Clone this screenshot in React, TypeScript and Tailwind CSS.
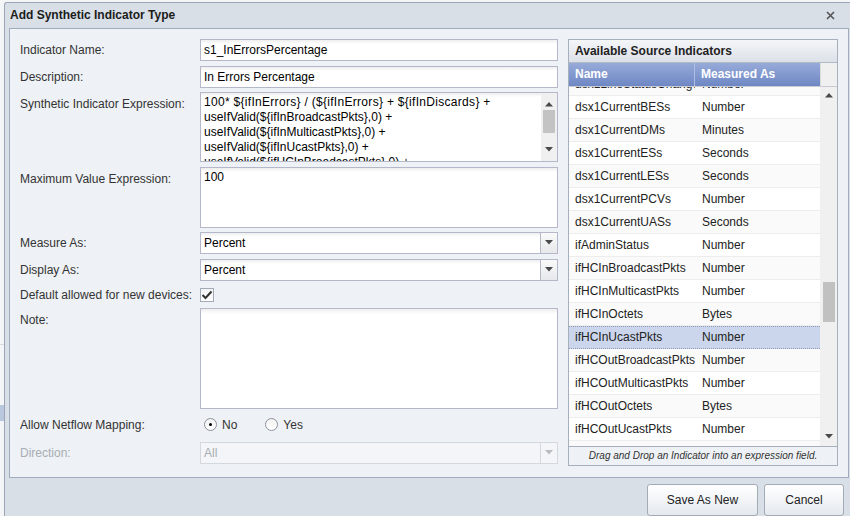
import React from "react";

const rows: [string, string][] = [
  ["dsx1LineStatusChange", "Number"],
  ["dsx1CurrentBESs", "Number"],
  ["dsx1CurrentDMs", "Minutes"],
  ["dsx1CurrentESs", "Seconds"],
  ["dsx1CurrentLESs", "Seconds"],
  ["dsx1CurrentPCVs", "Number"],
  ["dsx1CurrentUASs", "Seconds"],
  ["ifAdminStatus", "Number"],
  ["ifHCInBroadcastPkts", "Number"],
  ["ifHCInMulticastPkts", "Number"],
  ["ifHCInOctets", "Bytes"],
  ["ifHCInUcastPkts", "Number"],
  ["ifHCOutBroadcastPkts", "Number"],
  ["ifHCOutMulticastPkts", "Number"],
  ["ifHCOutOctets", "Bytes"],
  ["ifHCOutUcastPkts", "Number"],
  ["ifInBroadcastPkts", "Number"],
];

const expression = [
  "100* ${ifInErrors} / (${ifInErrors} + ${ifInDiscards} +",
  "useIfValid(${ifInBroadcastPkts},0) +",
  "useIfValid(${ifInMulticastPkts},0) +",
  "useIfValid(${ifInUcastPkts},0) +",
  "useIfValid(${ifHCInBroadcastPkts},0) +",
];

function Down({ color = "#4a4a4a" }: { color?: string }) {
  return (
    <svg width="8" height="5" viewBox="0 0 8 5">
      <path d="M0 0H8L4 4.5Z" fill={color} />
    </svg>
  );
}

function Up() {
  return (
    <svg width="8" height="5" viewBox="0 0 8 5">
      <path d="M0 4.5H8L4 0Z" fill="#4a4a4a" />
    </svg>
  );
}

function Label({ children, disabled }: { children: React.ReactNode; disabled?: boolean }) {
  return (
    <div className={`w-[180px] shrink-0 text-[12px] ${disabled ? "text-[#a8adb4]" : "text-[#333]"}`}>
      {children}
    </div>
  );
}

function TextField({ value }: { value: string }) {
  return (
    <div className="h-[22px] w-[358px] border border-[#b5b8c8] bg-[linear-gradient(to_bottom,#eeeeee,#ffffff_4px)] px-[3px] flex items-center text-[12px] text-black">
      {value}
    </div>
  );
}

function Select({ value, disabled }: { value: string; disabled?: boolean }) {
  return (
    <div
      className={`h-[22px] w-[358px] border flex ${
        disabled ? "border-[#d3d7de] bg-[#f3f5f8] text-[#a8adb4]" : "border-[#b5b8c8] bg-[linear-gradient(to_bottom,#eeeeee,#ffffff_4px)] text-black"
      }`}
    >
      <div className="flex-1 px-[3px] flex items-center text-[12px]">{value}</div>
      <div
        className={`w-[17px] border-l flex items-center justify-center ${
          disabled ? "border-[#d3d7de] bg-[#f3f5f8]" : "border-[#b5b8c8] bg-[linear-gradient(to_bottom,#fafafa,#e6e8eb)]"
        }`}
      >
        <Down color={disabled ? "#b8bcc2" : "#4a4a4a"} />
      </div>
    </div>
  );
}

function Radio({ checked }: { checked?: boolean }) {
  return (
    <div className="w-[13px] h-[13px] rounded-full border border-[#8d939c] bg-[linear-gradient(to_bottom,#f2f2f2,#ffffff)] flex items-center justify-center">
      {checked && <div className="w-[3px] h-[3px] rounded-full bg-black" />}
    </div>
  );
}

export default function App() {
  return (
    <div className="w-[850px] h-[516px] overflow-hidden bg-[#f4f5f7] flex font-['Liberation_Sans',Arial,sans-serif]">
      <div className="w-[4px] shrink-0 flex flex-col">
        <div className="h-[345px] border-b border-[#d7dbe1]" />
        <div className="h-[60px]" />
        <div className="h-[16px] bg-[#b9c8df]" />
      </div>
      <div className="mt-[2px] w-[846px] h-[514px] border-l border-t border-[#9aa5b5] rounded-tl-[3px] bg-[#d8dfe7] flex flex-col">
        <div className="h-[25px] flex items-center justify-between pl-[5px] pr-[15px] text-[12px] font-bold text-[#1c1c1c]">
          <span>Add Synthetic Indicator Type</span>
          <svg width="9" height="9" viewBox="0 0 9 9">
            <path d="M1 1L8 8M8 1L1 8" stroke="#555" strokeWidth="1.6" />
          </svg>
        </div>
        <div className="ml-[4px] mr-[1px] h-[452px] border border-[#a0acbd] bg-[#eef1f5] flex pl-[10px] pr-[10px] pt-[10px]">
          {/* left form */}
          <div className="w-[538px] shrink-0 flex flex-col">
            <div className="flex items-center">
              <Label>Indicator Name:</Label>
              <TextField value="s1_InErrorsPercentage" />
            </div>
            <div className="flex items-center mt-[5px]">
              <Label>Description:</Label>
              <TextField value="In Errors Percentage" />
            </div>
            <div className="flex mt-[4px]">
              <Label>
                <div className="pt-[3px]">Synthetic Indicator Expression:</div>
              </Label>
              <div className="h-[70px] w-[358px] border border-[#b5b8c8] bg-[linear-gradient(to_bottom,#eeeeee,#ffffff_4px)] flex">
                <div className="flex-1 overflow-hidden pl-[3px] pt-[2px] text-[12px] leading-[15px] text-black whitespace-pre">
                  {expression.map((l, i) => (
                    <div key={i} className={i === 0 ? "tracking-[0.3px]" : ""}>{l}</div>
                  ))}
                </div>
                <div className="w-[16px] bg-[#f0f0f0] flex flex-col items-center">
                  <div className="h-[14px] flex items-end justify-center"><Up /></div>
                  <div className="mt-[3px] w-[12px] h-[23px] bg-[#c3c3c3]" />
                  <div className="flex-1" />
                  <div className="h-[16px] flex items-start justify-center pt-[2px]"><Down /></div>
                </div>
              </div>
            </div>
            <div className="flex mt-[5px]">
              <Label>
                <div className="pt-[3px]">Maximum Value Expression:</div>
              </Label>
              <div className="h-[61px] w-[358px] border border-[#b5b8c8] bg-[linear-gradient(to_bottom,#eeeeee,#ffffff_4px)] pl-[3px] pt-[2px] text-[12px] leading-[15px] text-black">
                100
              </div>
            </div>
            <div className="flex items-center mt-[4px]">
              <Label>Measure As:</Label>
              <Select value="Percent" />
            </div>
            <div className="flex items-center mt-[5px]">
              <Label>Display As:</Label>
              <Select value="Percent" />
            </div>
            <div className="flex items-center mt-[7px] h-[14px]">
              <Label>Default allowed for new devices:</Label>
              <div className="w-[14px] h-[14px] border border-[#a3aab8] bg-[linear-gradient(to_bottom,#f3f3f3,#ffffff)] flex items-center justify-center">
                <svg width="12" height="10" viewBox="0 0 12 10">
                  <path d="M1.5 5L4.5 8L10.5 1.5" stroke="#333" strokeWidth="2" fill="none" />
                </svg>
              </div>
            </div>
            <div className="flex mt-[6px]">
              <Label>
                <div className="pt-[3px]">Note:</div>
              </Label>
              <div className="h-[101px] w-[358px] border border-[#b5b8c8] bg-[linear-gradient(to_bottom,#eeeeee,#ffffff_5px)]" />
            </div>
            <div className="flex items-center mt-[7px] h-[18px]">
              <Label>Allow Netflow Mapping:</Label>
              <div className="flex items-center pl-[4px] text-[12px] text-[#333]">
                <Radio checked />
                <span className="ml-[5px]">No</span>
                <div className="ml-[28px]"><Radio /></div>
                <span className="ml-[5px]">Yes</span>
              </div>
            </div>
            <div className="flex items-center mt-[8px]">
              <Label disabled>Direction:</Label>
              <Select value="All" disabled />
            </div>
          </div>

          {/* right panel */}
          <div className="ml-[10px] w-[270px] h-[427px] border border-[#a6afbc] bg-white flex flex-col">
            <div className="h-[23px] shrink-0 border-b border-[#b2bac6] bg-[linear-gradient(to_bottom,#f4f6f9,#dce1e8)] flex items-center pl-[6px] text-[12px] font-bold text-[#222]">
              Available Source Indicators
            </div>
            <div className="h-[24px] shrink-0 flex border-b border-[#c8ccd2]">
              <div className="w-[251px] flex bg-[linear-gradient(to_bottom,#97abd9,#6e87c4)] text-white font-bold text-[12px]">
                <div className="w-[126px] border-r border-[#b0bee2] flex items-center pl-[6px]">Name</div>
                <div className="flex-1 flex items-center pl-[6px]">Measured As</div>
              </div>
              <div className="flex-1 bg-[#f0f0f0] border-l border-[#dcdcdc]" />
            </div>
            <div className="flex-1 flex overflow-hidden">
              <div className="flex-1 overflow-hidden">
                <div className="-mt-[14px]">
                  {rows.map(([n, m], i) => {
                    const sel = n === "ifHCInUcastPkts";
                    return (
                      <div
                        key={n}
                        className={`h-[23px] flex items-center text-[12px] text-[#222] ${
                          sel
                            ? "bg-[#cbd6ec] border-y border-dotted border-[#8f9bb6]"
                            : `border-b border-[#ededed] ${i % 2 ? "bg-white" : "bg-[#fafafa]"}`
                        }`}
                      >
                        <div className="w-[126px] shrink-0 pl-[6px] overflow-hidden whitespace-nowrap">{n}</div>
                        <div className="pl-[7px]">{m}</div>
                      </div>
                    );
                  })}
                </div>
              </div>
              <div className="w-[17px] bg-[#f0f0f0] flex flex-col items-center">
                <div className="h-[11px] flex items-end justify-center"><Up /></div>
                <div className="mt-[184px] w-[12px] h-[40px] bg-[#c1c1c1]" />
                <div className="flex-1" />
                <div className="h-[12px] flex items-start justify-center"><Down /></div>
              </div>
            </div>
            <div className="h-[19px] shrink-0 border-t border-[#a6afbc] bg-[#eef1f5] flex items-center justify-center text-[10px] italic text-[#333]">
              Drag and Drop an Indicator into an expression field.
            </div>
          </div>
        </div>
        <div className="flex justify-end gap-[6px] pt-[6px] pr-[6px]">
          <div className="w-[111px] h-[32px] border border-[#a3abb7] rounded-[3px] bg-[linear-gradient(to_bottom,#ffffff,#e5e9ee)] flex items-center justify-center text-[12px] text-[#222]">
            Save As New
          </div>
          <div className="w-[80px] h-[32px] border border-[#a3abb7] rounded-[3px] bg-[linear-gradient(to_bottom,#ffffff,#e5e9ee)] flex items-center justify-center text-[12px] text-[#222]">
            Cancel
          </div>
        </div>
      </div>
    </div>
  );
}
